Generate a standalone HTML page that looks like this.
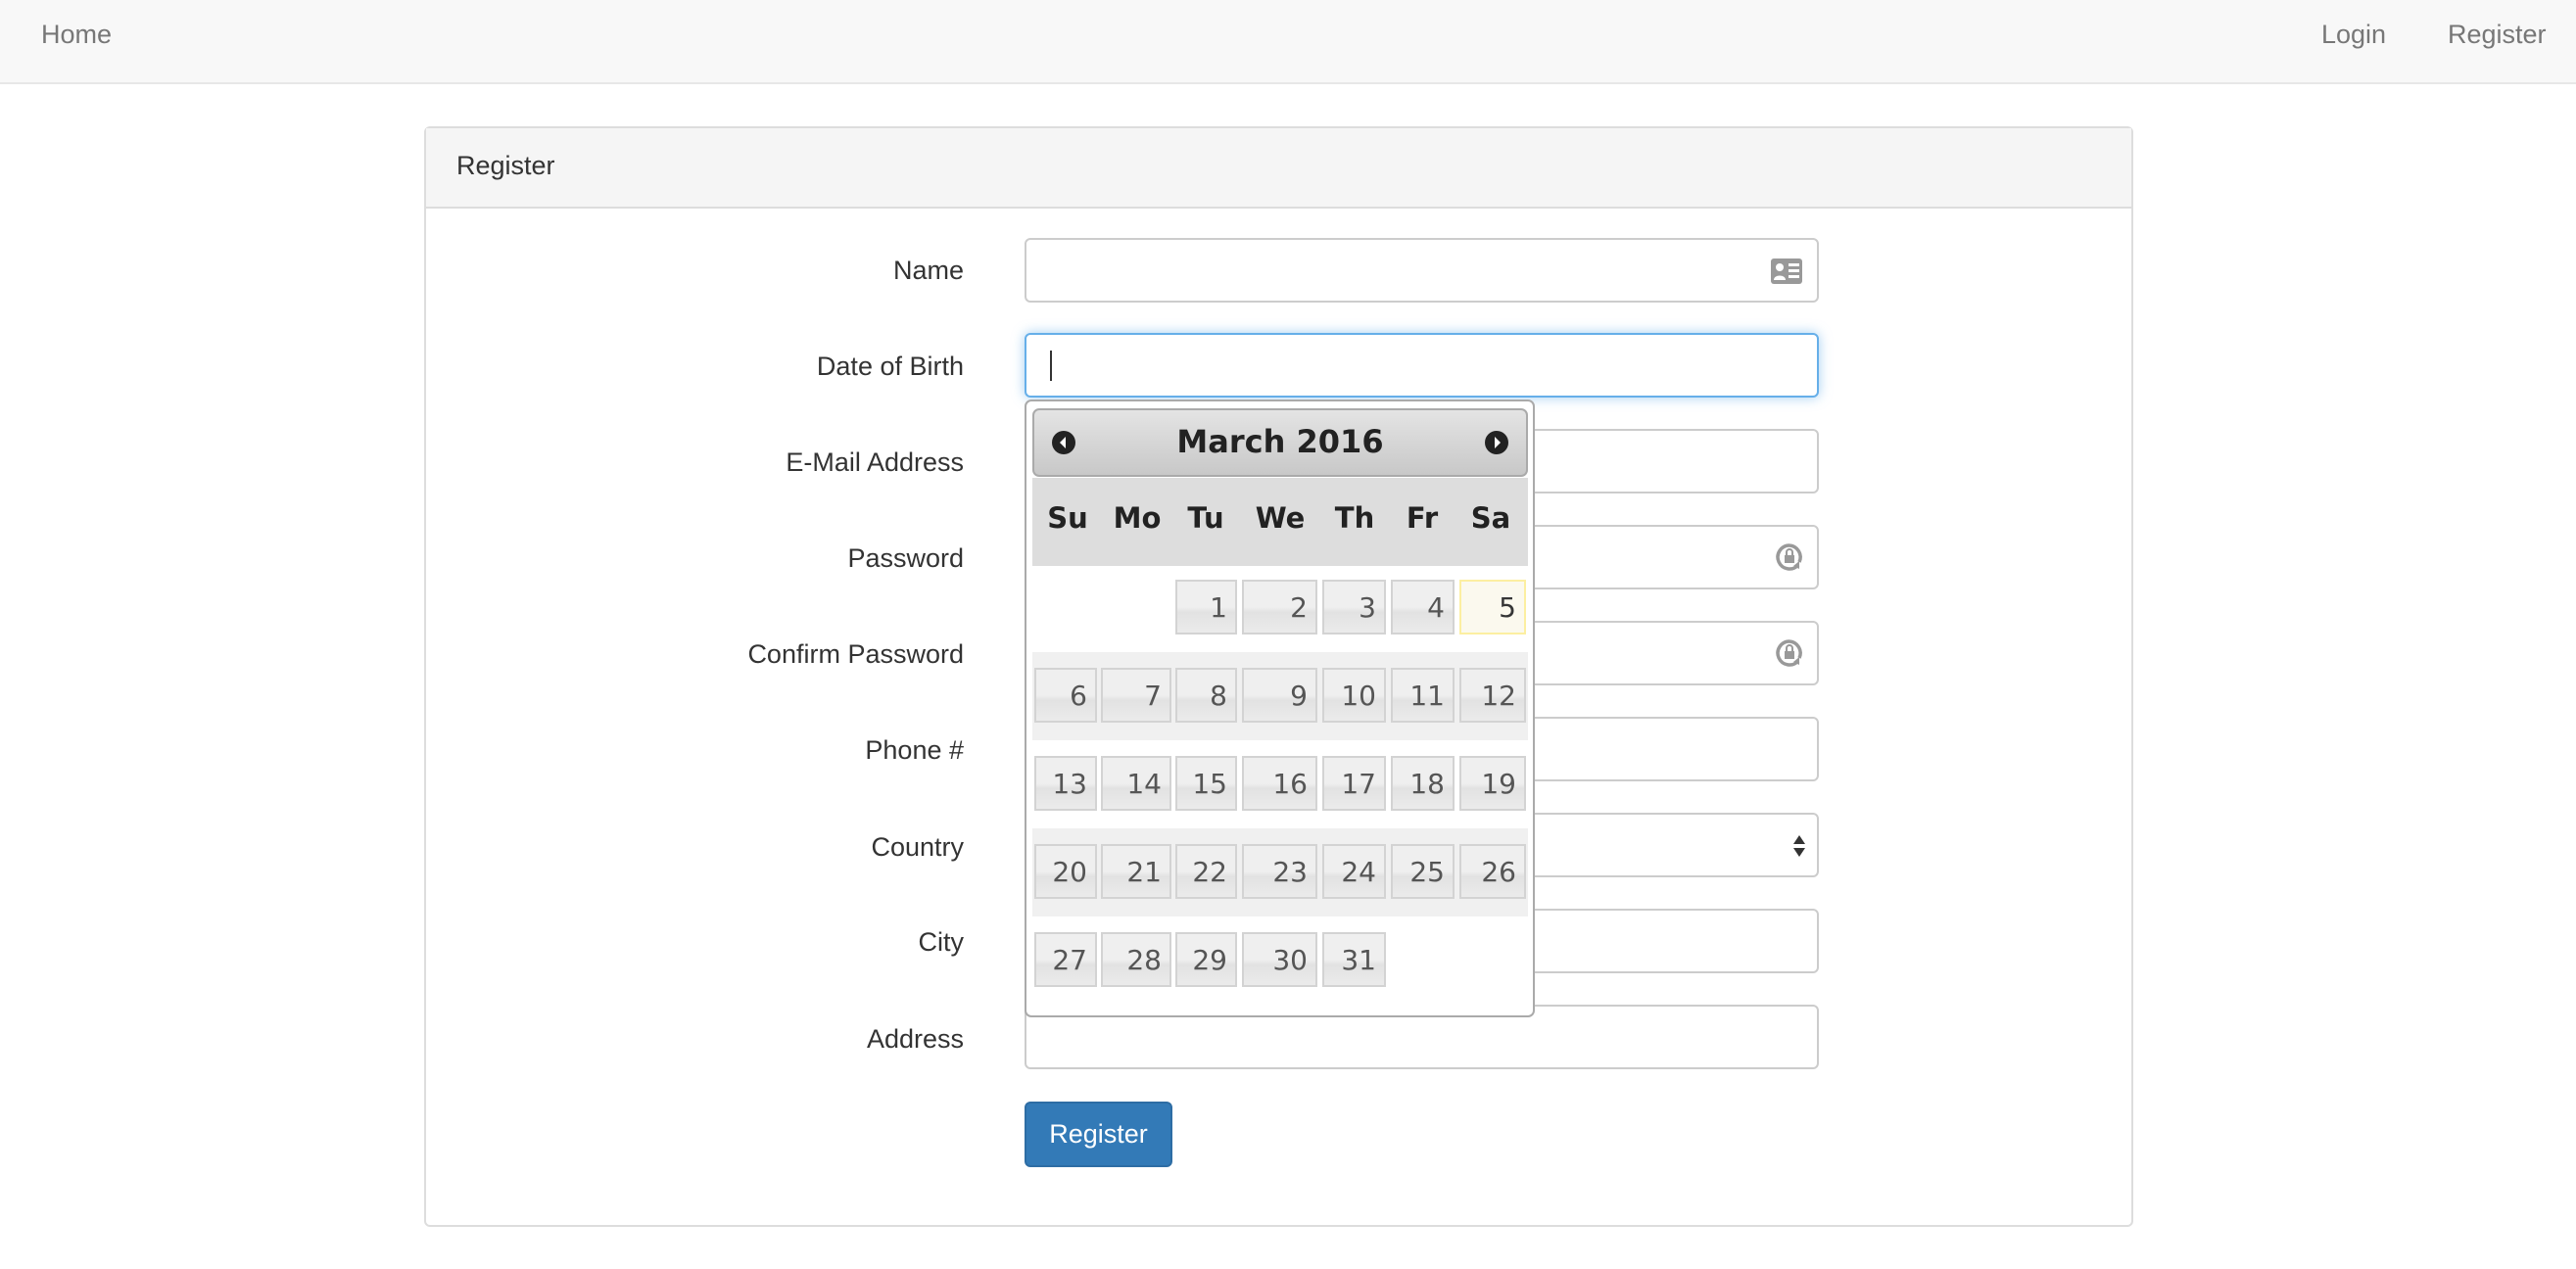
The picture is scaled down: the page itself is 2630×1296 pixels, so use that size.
<!DOCTYPE html>
<html><head><meta charset="utf-8"><style>
*{box-sizing:border-box;margin:0;padding:0}
body{width:2630px;height:1296px;background:#fff;font-family:"Liberation Sans",sans-serif;color:#333;position:relative;overflow:hidden}
.nav{position:absolute;left:0;top:0;width:2630px;height:86px;background:#f8f8f8;border-bottom:2px solid #e7e7e7}
.nav span{position:absolute;top:20px;font-size:27px;color:#777}
.panel{position:absolute;left:433px;top:129px;width:1745px;height:1124px;border:2px solid #ddd;border-radius:6px}
.ph{height:82px;background:#f5f5f5;border-bottom:2px solid #ddd;padding:23px 0 0 31px;font-size:27px}
.lbl{position:absolute;right:1646px;font-size:27px;text-align:right;white-space:nowrap}
.inp{position:absolute;left:1046px;width:811px;height:66px;border:2px solid #ccc;border-radius:6px;background:#fff}
.focus{border-color:#66afe9;box-shadow:0 0 12px rgba(102,175,233,.6)}
.btn{position:absolute;left:1046px;top:1125px;width:151px;height:67px;background:#337ab7;border:2px solid #2e6da4;border-radius:6px;color:#fff;font-size:27px;text-align:center;line-height:62px}
.cal{position:absolute;left:1046px;top:408px;width:521px;height:631px;border:2px solid #aaa;border-radius:7px;background:#fff;font-family:"DejaVu Sans",sans-serif}
.ch{position:absolute;left:6px;top:7px;width:506px;height:70px;border:2px solid #aaa;border-radius:7px;background:linear-gradient(#e4e4e4,#c8c8c8);text-align:center;font-weight:bold;font-size:32px;line-height:64px;color:#222}
.arr{position:absolute;top:21px;width:24px;height:24px;border-radius:50%;background:#222;line-height:0}
.arr svg{display:block}
.dn{position:absolute;left:6px;top:78px;width:506px;height:90px;background:#ddd}
.dn span{position:absolute;top:24px;font-weight:bold;font-size:29px;color:#222;transform:translateX(-50%)}
.band{position:absolute;left:6px;width:506px;height:90px;background:#f0f0f0}
.d{position:absolute;height:56px;border:2px solid #d3d3d3;background:linear-gradient(#efefef 50%,#e2e2e2 60%,#ebebeb);color:#555;font-size:28px;text-align:right;padding-right:8px;line-height:54px}
.t{background:#fbf9ee;border-color:#fcefa1;color:#363636}
</style></head><body>
<div class="nav"><span style="left:42px">Home</span><span style="left:2370px">Login</span><span style="left:2499px">Register</span></div>
<div class="panel"><div class="ph">Register</div></div>
<div class="lbl" style="top:261px">Name</div>
<div class="lbl" style="top:359px">Date of Birth</div>
<div class="lbl" style="top:457px">E-Mail Address</div>
<div class="lbl" style="top:555px">Password</div>
<div class="lbl" style="top:653px">Confirm Password</div>
<div class="lbl" style="top:751px">Phone #</div>
<div class="lbl" style="top:850px">Country</div>
<div class="lbl" style="top:947px">City</div>
<div class="lbl" style="top:1046px">Address</div>
<div class="inp" style="top:243px"><svg style="position:absolute;left:760px;top:19px" width="32" height="26" viewBox="0 0 32 26"><rect width="32" height="26" rx="3" fill="#999"/><circle cx="9" cy="9" r="4" fill="#fff"/><path d="M3 22c0-6 12-6 12 0z" fill="#fff"/><rect x="18" y="5" width="11" height="3" fill="#fff"/><rect x="18" y="11" width="11" height="3" fill="#fff"/><rect x="18" y="17" width="11" height="3" fill="#fff"/></svg></div>
<div class="inp focus" style="top:340px"><div style="position:absolute;left:24px;top:16px;width:2px;height:31px;background:#333"></div></div>
<div class="inp" style="top:438px"></div>
<div class="inp" style="top:536px"><svg style="position:absolute;left:764px;top:16px" width="30" height="32" viewBox="0 0 30 32"><path d="M15 3a12 12 0 1 0 9 20" fill="none" stroke="#999" stroke-width="3.5"/><path d="M15 3a12 12 0 0 1 10 17" fill="none" stroke="#999" stroke-width="3.5"/><path d="M19 24l6-5 0 8z" fill="#999"/><rect x="10" y="13" width="10" height="8" fill="#999"/><path d="M12 13v-3a3 3 0 0 1 6 0v3" fill="none" stroke="#999" stroke-width="2"/></svg></div>
<div class="inp" style="top:634px"><svg style="position:absolute;left:764px;top:16px" width="30" height="32" viewBox="0 0 30 32"><path d="M15 3a12 12 0 1 0 9 20" fill="none" stroke="#999" stroke-width="3.5"/><path d="M15 3a12 12 0 0 1 10 17" fill="none" stroke="#999" stroke-width="3.5"/><path d="M19 24l6-5 0 8z" fill="#999"/><rect x="10" y="13" width="10" height="8" fill="#999"/><path d="M12 13v-3a3 3 0 0 1 6 0v3" fill="none" stroke="#999" stroke-width="2"/></svg></div>
<div class="inp" style="top:732px"></div>
<div class="inp" style="top:830px"><svg style="position:absolute;left:782px;top:19px" width="14" height="26" viewBox="0 0 14 26"><path d="M7 2l6 9H1zM7 24l6-9H1z" fill="#333"/></svg></div>
<div class="inp" style="top:928px"></div>
<div class="inp" style="top:1026px"></div>
<div class="btn">Register</div>
<div class="cal">
<div class="ch"><div class="arr" style="left:18px"><svg width="24" height="24"><path d="M14 6l-6 6 6 6z" fill="#fff"/></svg></div>March 2016<div class="arr" style="right:18px;left:auto"><svg width="24" height="24"><path d="M10 6l6 6-6 6z" fill="#fff"/></svg></div></div>
<div class="dn"><span style="left:36px">Su</span><span style="left:107px">Mo</span><span style="left:177px">Tu</span><span style="left:253px">We</span><span style="left:329px">Th</span><span style="left:398px">Fr</span><span style="left:468px">Sa</span></div>
<div class="band" style="top:256px"></div>
<div class="band" style="top:436px"></div>
<div id="g"></div>
</div>
<script>
var cx=[[8,64],[76,72],[152,63],[220,77],[302,65],[372,65],[442,68]];
var ys=[182,272,362,452,542];var h='';var day=1;
for(var r=0;r<5;r++)for(var c=0;c<7;c++){if(r==0&&c<2)continue;if(day>31)break;
h+='<div class="d'+(day==5?' t':'')+'" style="left:'+cx[c][0]+'px;width:'+cx[c][1]+'px;top:'+ys[r]+'px">'+day+'</div>';day++;}
document.getElementById('g').outerHTML=h;
</script>
</body></html>
